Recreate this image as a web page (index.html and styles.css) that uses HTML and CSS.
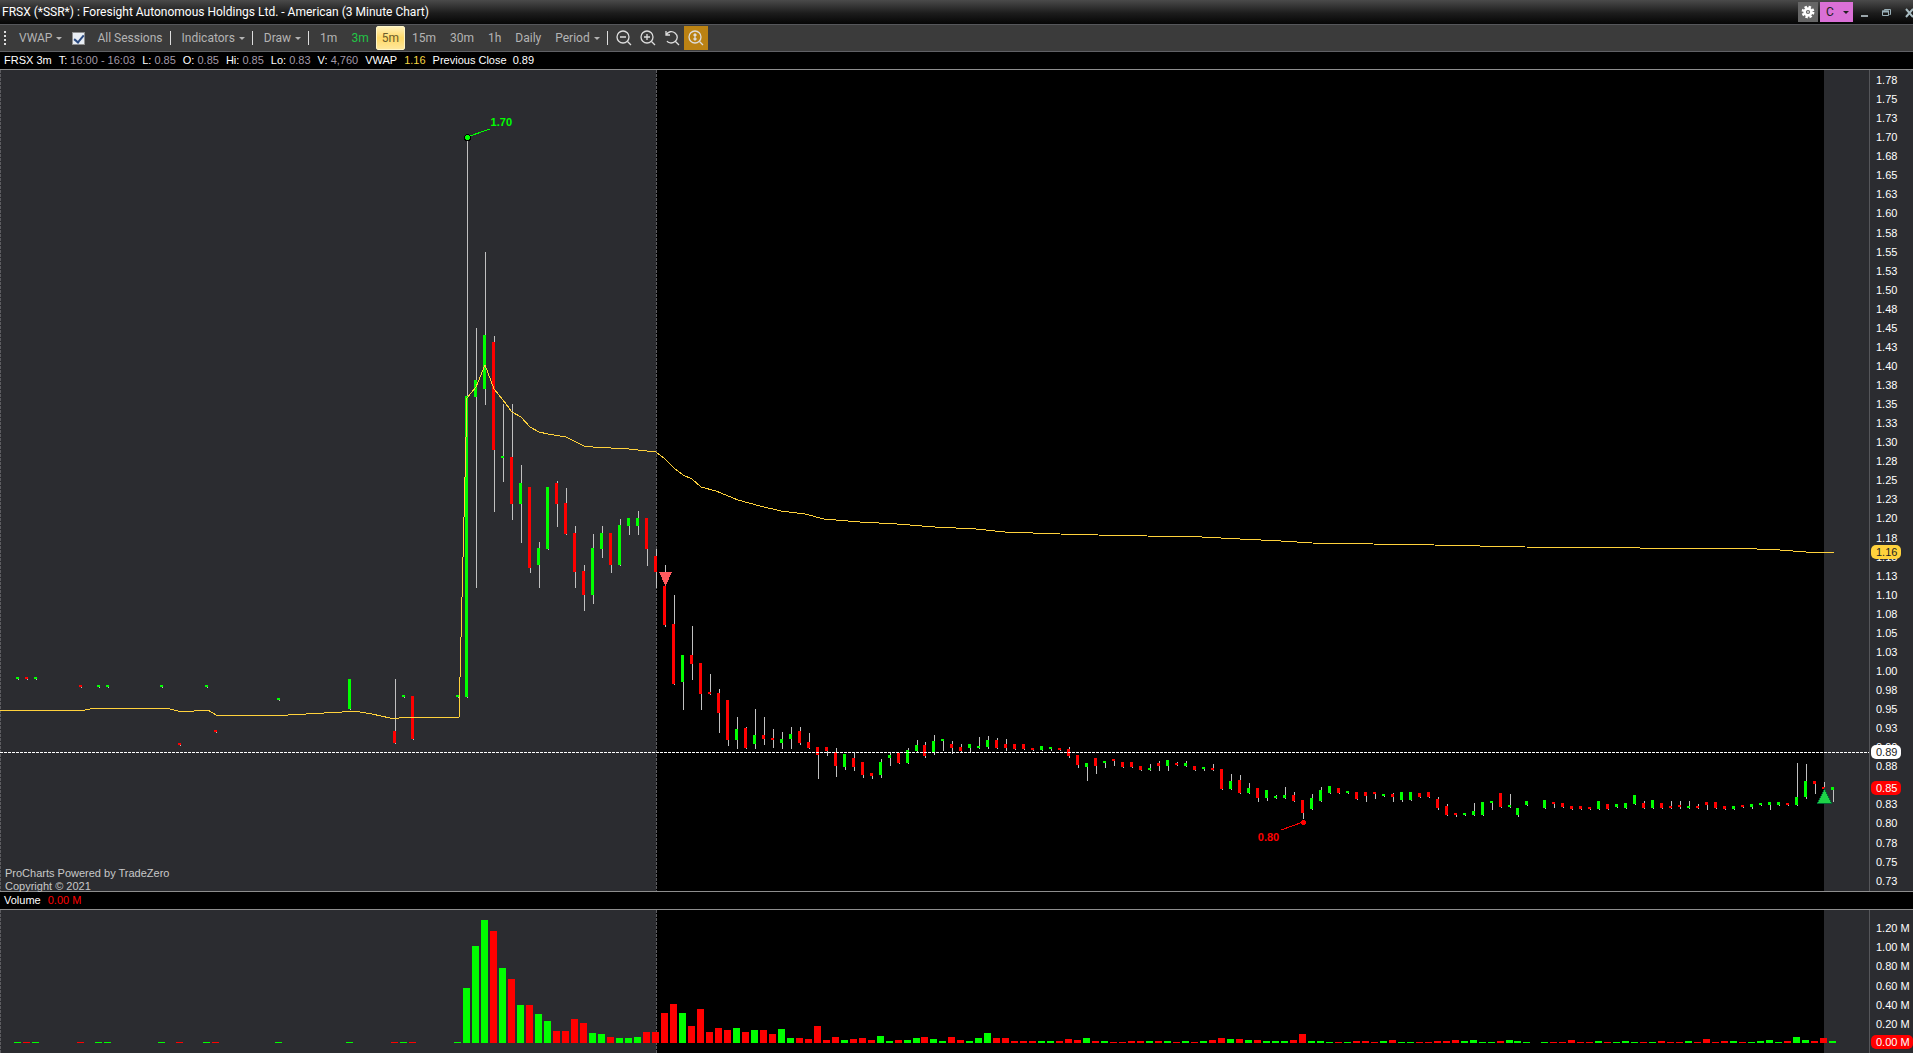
FILE: index.html
```html
<!DOCTYPE html>
<html lang="en">
<head>
  <meta charset="UTF-8" />
  <meta name="viewport" content="width=device-width, initial-scale=1.0" />
  <title>FRSX - 3 Minute Chart</title>
  <link rel="stylesheet" href="styles.css">
</head>
<body>
  <header class="titlebar">
    <h1 class="title">FRSX (*SSR*) : Foresight Autonomous Holdings Ltd. - American (3 Minute Chart)</h1>
    <button class="gear" aria-label="Settings">
      <svg width="14" height="14" viewBox="0 0 14 14">
        <circle cx="7" cy="7" r="5.2" fill="none" stroke="#fff" stroke-width="2.4" stroke-dasharray="2.4 1.68" />
        <circle cx="7" cy="7" r="3.4" fill="none" stroke="#fff" stroke-width="2.6" />
        <circle cx="7" cy="7" r="1" fill="#ddd" />
      </svg>
    </button>
    <button class="link-group" aria-label="Link group C"><span>C</span><span class="arrow"></span></button>
    <div class="window-buttons">
      <button aria-label="Minimize"><svg width="8" height="12" viewBox="0 0 8 12"><path d="M0 9h7v2H0z" fill="#9aa5aa" /></svg></button>
      <button aria-label="Restore">
        <svg width="10" height="12" viewBox="0 0 10 12" fill="none" stroke="#9ab0b8"><path d="M2.500 4.500V3.500H8.500V8.500H7.500" /><path d="M.5 5h6v4.500h-6z" stroke-width="1" /><path d="M0 5.500h7" stroke-width="2" /></svg>
      </button>
      <button aria-label="Close"><svg width="9" height="12" viewBox="0 0 9 12"><path d="M1 3l7 8M8 3l-7 8" stroke="#a9bcc2" stroke-width="2" /></svg></button>
    </div>
  </header>

  <nav class="toolbar">
    <span class="grip"></span>
    <button class="tool menu">VWAP<span class="arrow"></span></button>
    <label class="sessions"><input type="checkbox" checked />All Sessions</label>
    <span class="sep"></span>
    <button class="tool menu">Indicators<span class="arrow"></span></button>
    <span class="sep"></span>
    <button class="tool menu">Draw<span class="arrow"></span></button>
    <span class="sep"></span>
    <div class="periods">
      <button class="tool">1m</button>
      <button class="tool current">3m</button>
      <button class="tool hot">5m</button>
      <button class="tool">15m</button>
      <button class="tool">30m</button>
      <button class="tool">1h</button>
      <button class="tool">Daily</button>
      <button class="tool menu">Period<span class="arrow"></span></button>
    </div>
    <span class="sep"></span>
    <div class="zooms">
      <button aria-label="Zoom out"><svg width="18" height="18" viewBox="0 0 18 18"><circle cx="8" cy="8" r="6" /><path d="M12.500 12.500L16 16M5 8h6" /></svg></button>
      <button aria-label="Zoom in"><svg width="18" height="18" viewBox="0 0 18 18"><circle cx="8" cy="8" r="6" /><path d="M12.500 12.500L16 16M5 8h6M8 5v6" /></svg></button>
      <button aria-label="Reset zoom"><svg width="18" height="18" viewBox="0 0 18 18"><path d="M3 2v4h4M3 6C5 2.500 9 1.500 12 4s3 6 0 8.500S5 14 4 12M12.500 12.500L16 16" /></svg></button>
      <button class="on" aria-label="Auto scale"><svg width="18" height="18" viewBox="0 0 18 18"><circle cx="8" cy="8" r="6" /><path d="M12.500 12.500L16 16M8 5v6M6.500 6.500L8 5l1.500 1.500M6.500 9.500L8 11l1.500-1.500" /></svg></button>
    </div>
  </nav>

  <div class="info">
    <span>FRSX 3m</span>
    <span>T: <i>16:00 - 16:03</i></span>
    <span>L: <i>0.85</i></span>
    <span>O: <i>0.85</i></span>
    <span>Hi: <i>0.85</i></span>
    <span>Lo: <i>0.83</i></span>
    <span>V: <i>4,760</i></span>
    <span>VWAP</span>
    <span class="vwap">1.16</span>
    <span>Previous Close&nbsp; 0.89</span>
  </div>

  <main class="panel price">
    <div class="plot">
      <svg id="priceChart" viewBox="0 70 1869 821" preserveAspectRatio="none" shape-rendering="crispEdges">
        <rect class="closed" x="0" y="70" width="656" height="821" />
        <rect class="closed" x="1824" y="70" width="45" height="821" />
        <path class="session" d="M.5 70V891M656.500 70V891" />
        <g id="candles"></g>
        <path class="prev-close" d="M0 752.500H1869" />
        <polyline class="vwap-line" points="0,710 85,710 95,708 166,708 178,711 194,711 196,710 208,710 216,715 288,715 306,714 324,713 342,712 354,711 372,714 390,718 399,718 401,717 459,717 467,398 476,387 485,365 494,389 503,400 512,412 521,417 530,427 539,432 548,434 566,437 584,446 593,447 611,448 629,449 656,452 665,459 674,468 683,475 692,479 701,487 716,491 738,500 760,506 781,511 805,514 824,519 860,522 897,524 935,527 976,529 1005,532 1060,534 1098,535 1147,536 1202,537 1240,539 1281,541 1312,543 1434,545 1525,547 1640,548 1757,549 1780,550 1806,552 1834,553" />
        <path class="callout up" d="M467 137L490 129" />
        <circle class="dot up" cx="467.5" cy="137.5" r="3" />
        <path class="callout down" d="M1303 822L1281 830" />
        <circle class="dot down" cx="1303.5" cy="822.5" r="2.500" />
        <path class="sell" d="M659 572h13l-6.500 14z" />
        <path class="buy" d="M1824.500 789l7 14h-14z" />
      </svg>
      <span class="tag high">1.70</span>
      <span class="tag low">0.80</span>
      <p class="watermark">ProCharts Powered by TradeZero<br>Copyright © 2021</p>
    </div>
    <div class="axis">
      <ol class="ticks" id="priceTicks"></ol>
      <span class="pill pill-vwap">1.16</span>
      <span class="pill pill-prev">0.89</span>
      <span class="pill pill-last">0.85</span>
    </div>
  </main>

  <div class="volume-head">Volume <b>0.00 M</b></div>

  <section class="panel volume">
    <div class="plot">
      <svg id="volumeChart" viewBox="0 910 1869 143" preserveAspectRatio="none" shape-rendering="crispEdges">
        <rect class="closed" x="0" y="910" width="656" height="143" />
        <rect class="closed" x="1824" y="910" width="45" height="143" />
        <path class="session" d="M.5 910V1053M656.500 910V1053" />
        <g id="bars"></g>
      </svg>
    </div>
    <div class="axis">
      <ol class="ticks">
        <li>1.20 M</li>
        <li>1.00 M</li>
        <li>0.80 M</li>
        <li>0.60 M</li>
        <li>0.40 M</li>
        <li>0.20 M</li>
      </ol>
      <span class="pill pill-volume">0.00 M</span>
    </div>
  </section>

  <script src="chart.js"></script>
</body>
</html>
```
FILE: styles.css
```css
* {
  box-sizing: border-box;
}
body {
  margin: 0;
  height: 100vh;
  display: flex;
  flex-direction: column;
  overflow: hidden;
  background: #000;
  color: #fff;
  font-family: "Liberation Sans", Arial, sans-serif;
  font-size: 11px;
}
button {
  margin: 0;
  padding: 0;
  border: none;
  background: none;
  color: inherit;
  font: inherit;
}
svg {
  display: block;
}

/* Title bar */
.titlebar {
  flex: none;
  display: flex;
  align-items: center;
  height: 24px;
  background: linear-gradient(#4a4a4a, #1c1c1c 55%, #050505);
}
.title {
  flex: 1;
  margin: 0;
  padding-left: 2px;
  font-family: Roboto, "Noto Sans", sans-serif;
  font-size: 12px;
  font-weight: normal;
  white-space: nowrap;
}
.gear {
  display: grid;
  place-items: center;
  width: 20px;
  height: 20px;
  margin-right: 2px;
  background: #666;
}
.link-group {
  display: flex;
  align-items: center;
  justify-content: space-between;
  width: 33px;
  height: 20px;
  padding: 0 4px 0 6px;
  background: #da70d6;
  color: #222;
  font-family: Roboto, sans-serif;
  font-size: 12px;
}
.window-buttons {
  display: flex;
  gap: 13px;
  margin-right: -1px;
  padding-left: 8px;
}
.arrow {
  width: 0;
  height: 0;
  border: 3px solid transparent;
  border-top-color: currentColor;
  border-bottom: none;
}

/* Toolbar */
.toolbar {
  flex: none;
  display: flex;
  align-items: center;
  height: 28px;
  border-top: 1px solid #55565a;
  border-bottom: 1px solid #606165;
  background: #3b3b3b;
  color: #b4b4b4;
  font-family: Roboto, "Noto Sans", sans-serif;
  font-size: 12px;
}
.grip {
  width: 2px;
  height: 14px;
  margin: 0 6px 0 4px;
  background: repeating-linear-gradient(#ddd 0 2px, transparent 2px 4px);
}
.menu {
  display: flex;
  align-items: center;
  gap: 4px;
  padding-left: 7px;
}
.sessions {
  display: flex;
  align-items: center;
  gap: 12px;
  margin-left: 10px;
}
.sessions input {
  appearance: none;
  width: 13px;
  height: 13px;
  margin: 0;
  border: 1px solid #8f8f8f;
  background: #e9eef4;
  display: grid;
  place-items: center;
}
.sessions input:checked::before {
  content: "";
  width: 4px;
  height: 8px;
  border: solid #2b4a80;
  border-width: 0 2px 2px 0;
  transform: rotate(40deg);
}
.sep {
  width: 1px;
  height: 14px;
  margin: 0 4px 0 7px;
  background: #ddd;
}
.periods {
  display: flex;
  align-items: center;
}
.periods .tool {
  height: 24px;
  padding: 0 7px;
}
.periods .menu {
  padding-right: 0;
}
.periods .current {
  color: #22c646;
}
.periods .hot {
  padding: 0 5px;
  border: 1px solid #fff6c8;
  border-radius: 2px;
  background: linear-gradient(#fff0b8, #ffd968 50%, #ffe79a);
  color: #6b5c2c;
}
.zooms {
  display: flex;
}
.zooms button {
  display: grid;
  place-items: center;
  width: 24px;
  height: 24px;
}
.zooms svg {
  fill: none;
  stroke: #ddd;
  stroke-width: 1.3;
}
.zooms .on {
  background: #bb8213;
}

/* Quote line above the chart */
.info {
  flex: none;
  display: flex;
  align-items: center;
  gap: 7px;
  height: 18px;
  padding: 0 0 2px 4px;
  border-bottom: 1px solid #8e8e8e;
  white-space: nowrap;
}
.info i {
  color: #a39aa8;
  font-style: normal;
}
.info .vwap {
  color: #f5d442;
}

/* Chart panels */
.panel {
  display: flex;
  min-height: 0;
}
.price {
  flex: 821 1 0;
}
.volume {
  flex: 143 1 0;
}
.plot {
  position: relative;
  flex: 1;
  min-width: 0;
}
.plot svg {
  width: 100%;
  height: 100%;
}
.closed {
  fill: #2b2c30;
}
.session {
  fill: none;
  stroke: #5c5c60;
  stroke-dasharray: 3 1;
}
.prev-close {
  stroke: #fff;
  stroke-dasharray: 3 1;
}
.vwap-line {
  fill: none;
  stroke: #ffd23c;
}
.wick {
  fill: #c0c0c0;
}
.g {
  fill: #0f0;
}
.r {
  fill: #f00;
}
.callout.up {
  stroke: #0f0;
}
.callout.down {
  stroke: #f00;
}
.dot.up {
  fill: #0f0;
  stroke: #000;
}
.dot.down {
  fill: #f00;
}
.sell {
  fill: #ff5a5f;
}
.buy {
  fill: #1ed348;
  stroke: #063;
}
.tag {
  position: absolute;
  font-size: 11px;
  font-weight: bold;
  line-height: 12px;
}
.high {
  left: 26.25%;
  top: 5.6%;
  color: #0f0;
}
.low {
  left: 67.3%;
  top: 92.7%;
  color: #f00;
}
.watermark {
  position: absolute;
  left: 5px;
  bottom: -2px;
  margin: 0;
  color: #c8c8c8;
  font-size: 11px;
  line-height: 13px;
}

/* Axes */
.axis {
  position: relative;
  flex: none;
  width: 44px;
  border-left: 1px solid #55565a;
  background: #2b2c30;
}
.ticks {
  display: flex;
  flex-direction: column;
  justify-content: space-between;
  height: 100%;
  margin: 0;
  padding: 4px 0 4px 6px;
  list-style: none;
  line-height: 12px;
  white-space: nowrap;
}
.volume .ticks {
  padding: 12px 0 23px 6px;
}
.pill {
  position: absolute;
  left: 1px;
  width: 30px;
  height: 14px;
  padding-left: 5px;
  border-radius: 5px;
  line-height: 14px;
  transform: translateY(-50%);
  white-space: nowrap;
}
.pill-vwap {
  top: 58.7%;
  background: #ffd23c;
  color: #222;
}
.pill-prev {
  top: 83.1%;
  background: #fff;
  color: #222;
}
.pill-last {
  top: 87.5%;
  background: #f00;
}
.pill-volume {
  top: 92.3%;
  width: 42px;
  background: #f00;
}
.volume-head {
  flex: none;
  height: 19px;
  padding-left: 4px;
  border: solid #8e8e8e;
  border-width: 1px 0;
  line-height: 17px;
}
.volume-head b {
  margin-left: 4px;
  color: #f00;
  font-weight: normal;
}
```
FILE: chart.js
```js
// slot, direction, high, body top, body bottom, low, volume
const candles = `
0 g 677 677 679 680 1
1 r 677 677 679 680 1
2 g 677 677 679 680 1
7 r 685 685 687 688 1
9 g 685 685 687 688 1
10 g 685 685 687 688 1
16 g 685 685 687 688 1
18 r 743 743 745 746 1
21 g 685 685 687 688 1
22 r 730 730 732 733 1
29 g 698 698 700 701 1
37 g 679 679 709 710 1
42 r 679 731 743 744 1
43 g 695 695 697 698 1
44 r 696 696 739 740 1
49 g 695 695 697 698 1
50 g 140 396 697 698 55
51 g 328 380 397 588 97
52 g 252 335 389 405 123
53 r 336 342 450 512 112
54 g 404 456 458 482 75
55 r 404 457 504 520 64
56 g 465 483 504 543 38
57 r 487 487 568 573 38
58 g 542 548 565 588 29
59 g 487 487 549 550 22
60 r 481 483 504 527 12
61 r 488 503 534 535 12
62 r 526 533 572 588 24
63 r 565 571 595 611 20
64 g 534 548 595 604 10
65 g 526 533 549 558 9
66 r 533 533 565 573 6
67 g 519 525 565 566 5
68 g 518 518 526 535 5
69 g 511 518 526 535 6
70 r 518 518 549 566 11
71 r 549 556 572 588 11
72 r 565 586 625 627 30
73 r 595 624 684 685 39
74 g 655 655 682 710 30
75 r 626 655 664 680 17
76 r 663 663 694 710 34
77 r 674 692 694 695 11
78 r 689 693 713 733 15
79 r 700 700 740 746 13
80 g 717 729 740 749 15
81 r 727 728 748 749 11
82 g 709 735 744 749 13
83 r 717 735 739 745 13
84 r 729 738 740 748 9
85 g 732 739 743 749 14
86 g 727 734 739 749 5
87 r 727 731 743 745 5
88 r 733 742 748 749 4
89 r 747 747 755 779 17
90 r 747 747 751 756 3
91 r 748 752 766 777 6
92 g 754 754 767 770 3
93 r 752 758 767 771 4
94 r 762 762 775 778 5
95 r 773 773 776 779 3
96 g 759 762 775 778 7
97 g 752 755 758 766 2
98 r 753 753 763 764 3
99 g 748 750 763 764 3
100 g 740 745 751 752 5
101 r 742 745 756 758 6
102 g 735 741 752 755 4
103 g 739 739 741 751 2
104 r 741 744 748 754 6
105 r 744 747 751 752 3
106 g 744 744 748 752 2
107 g 737 746 748 749 5
108 g 736 740 747 749 10
109 r 738 740 748 749 5
110 r 739 744 748 751 5
111 r 744 744 749 750 2
112 r 744 744 749 750 2
113 r 748 748 750 751 2
114 g 746 746 750 751 2
115 g 747 747 749 751 2
116 r 748 748 750 751 2
117 r 747 749 756 758 4
118 r 755 755 765 768 3
119 g 763 763 767 781 5
120 r 758 758 766 774 2
121 g 761 761 763 768 2
122 r 759 759 761 766 1
123 r 762 762 767 768 1
124 r 762 762 767 768 2
125 r 766 766 770 771 2
126 g 764 768 770 771 2
127 r 761 763 766 771 2
128 g 760 760 766 771 2
129 r 762 763 765 766 1
130 g 761 763 766 767 2
131 r 766 766 770 771 1
132 g 767 767 769 771 2
133 r 764 768 770 771 3
134 r 769 769 789 790 5
135 g 774 781 789 790 4
136 r 775 780 793 794 4
137 g 783 788 793 794 3
138 r 788 788 798 802 3
139 g 790 790 798 801 2
140 g 795 796 798 799 2
141 g 787 795 798 799 2
142 r 792 795 801 802 3
143 r 800 800 813 819 9
144 g 794 798 809 810 2
145 g 787 790 801 802 2
146 g 786 786 793 794 1
147 r 788 788 793 794 1
148 g 791 791 793 794 1
149 r 792 792 799 800 2
150 r 792 792 796 802 2
151 r 792 792 794 799 1
152 g 794 794 796 797 2
153 r 793 794 797 802 3
154 g 792 792 800 802 1
155 g 792 792 800 801 1
156 r 793 793 797 798 1
157 r 792 792 797 798 1
158 r 797 799 808 810 2
159 r 804 806 815 816 2
160 r 813 813 815 817 3
161 g 813 813 815 816 2
162 g 803 811 815 816 3
163 g 802 802 815 816 1
164 g 801 801 803 810 1
165 r 793 793 807 808 2
166 g 794 805 807 808 3
167 g 808 808 815 817 2
168 g 801 801 805 806 1
170 g 800 800 808 809 1
171 r 802 802 804 808 1
172 r 803 803 807 808 1
173 r 806 806 809 810 3
174 r 806 806 809 810 1
175 r 807 807 809 810 1
176 g 801 801 809 810 2
177 r 804 804 809 810 1
178 g 804 804 807 808 1
179 g 803 803 808 809 2
180 g 795 795 804 805 1
181 r 801 803 808 809 1
182 g 800 800 808 809 1
183 r 803 803 808 809 2
184 r 801 806 808 809 1
185 r 801 805 807 809 1
186 g 801 806 808 809 2
187 r 804 806 808 809 1
188 r 802 802 805 810 4
189 r 802 802 808 809 1
190 r 806 806 809 810 2
191 g 806 806 809 810 2
192 r 805 805 807 808 1
193 g 804 804 807 809 1
194 g 803 803 805 806 2
195 g 802 802 805 810 3
196 g 802 802 805 806 1
197 r 803 803 805 806 2
198 g 763 797 805 806 6
199 g 764 781 797 799 3
200 r 781 781 784 794 2
201 r 782 787 789 790 5
202 g 787 787 790 802 2
`.trim().split("\n").map(row => row.split(" "));

const volumeBase = 1043;

function rect(parent, cls, x, y, width, height) {
  const el = document.createElementNS("http://www.w3.org/2000/svg", "rect");
  el.setAttribute("class", cls);
  el.setAttribute("x", x);
  el.setAttribute("y", y);
  el.setAttribute("width", width);
  el.setAttribute("height", height);
  parent.appendChild(el);
}

const candleGroup = document.getElementById("candles");
const barGroup = document.getElementById("bars");

candles.forEach(([slot, dir, high, top, bottom, low, volume]) => {
  const x = Math.round(18 + slot * 8.985);
  rect(candleGroup, "wick", x, high, 1, low - high);
  rect(candleGroup, dir, x - 2, top, 3, bottom - top);
  rect(barGroup, dir, x - 4, volumeBase - volume, 7, volume);
});

// Price labels, every 2.5 cents from 1.775 down to 0.725
const ticks = document.getElementById("priceTicks");
for (let mills = 1775; mills >= 725; mills -= 25) {
  const li = document.createElement("li");
  li.textContent = (Math.round(mills / 10) / 100).toFixed(2);
  ticks.appendChild(li);
}
```
